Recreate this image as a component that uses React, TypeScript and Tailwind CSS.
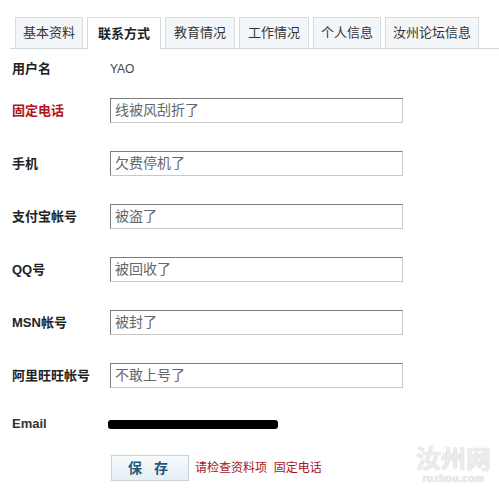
import React from 'react';

const tabs = [
  { name: '基本资料', w: 'w-[68px]' },
  { name: '联系方式', w: 'w-[74px]', active: true },
  { name: '教育情况', w: 'w-[70px]' },
  { name: '工作情况', w: 'w-[70px]' },
  { name: '个人信息', w: 'w-[68px]' },
  { name: '汝州论坛信息', w: 'w-[94px]' },
];

const fields = [
  { label: '固定电话', value: '线被风刮折了', error: true },
  { label: '手机', value: '欠费停机了' },
  { label: '支付宝帐号', value: '被盗了' },
  { label: 'QQ号', value: '被回收了' },
  { label: 'MSN帐号', value: '被封了' },
  { label: '阿里旺旺帐号', value: '不敢上号了' },
];

const App: React.FC = () => {
  return (
    <div
      className="relative w-[499px] h-[496px] bg-white overflow-hidden text-[12px] text-[#333]"
      style={{ fontFamily: '"Liberation Sans", "Noto Sans CJK SC", sans-serif' }}
    >
      <div className="pt-[17px] pl-[10px]">
        <div className="flex items-end gap-[4px] pl-[5px] border-b border-[#cfd6dc] h-[32px]">
          {tabs.map(t => (
            <div
              key={t.name}
              className={`${t.w} flex items-center justify-center border border-b-0 border-[#d4dbe1] text-[13px] ${
                t.active
                  ? 'h-[32px] bg-white font-bold text-[#222] -mb-px'
                  : 'h-[31px] bg-[#f3f6f9] text-[#333]'
              }`}
            >
              {t.name}
            </div>
          ))}
        </div>
      </div>

      <div className="pl-[12px] pt-[10px]">
        <div className="flex items-center h-[20px]">
          <div className="w-[98px] font-bold text-[13px] text-[#222]">用户名</div>
          <div className="text-[#444]">YAO</div>
        </div>

        <div className="flex flex-col gap-[28px] mt-[19px]">
          {fields.map(f => (
            <div key={f.label} className="flex items-center h-[25px]">
              <div className={`w-[98px] font-bold text-[13px] ${f.error ? 'text-[#b3141c]' : 'text-[#222]'}`}>
                {f.label}
              </div>
              <div className="w-[293px] h-[25px] border border-t-[#7c7c7c] border-l-[#7c7c7c] border-r-[#c8c8c8] border-b-[#c8c8c8] flex items-center pl-[4px] text-[14px] text-[#666]">
                {f.value}
              </div>
            </div>
          ))}
        </div>

        <div className="flex items-center h-[20px] mt-[26px]">
          <div className="w-[96px] font-bold text-[13px] text-[#333]">Email</div>
          <div className="w-[170px] h-[9px] bg-black rounded-[3px]" />
        </div>

        <div className="flex items-center mt-[21px] pl-[99px]">
          <button className="w-[78px] h-[26px] border border-[#c9d2da] bg-gradient-to-b from-[#f8fbfd] to-[#e4eef5] font-bold text-[14px] text-[#1f5a7c] tracking-[4px]">
            保 存
          </button>
          <span className="ml-[6px] text-[#a8141c]">请检查资料项&nbsp;&nbsp;固定电话</span>
        </div>
      </div>

      <div className="absolute left-[416px] top-[446px] flex flex-col items-center text-[#ececec]">
        <div className="text-[25px] font-bold leading-[27px]" style={{ textShadow: '0 0 1px #c4c4c4' }}>汝州网</div>
        <div className="text-[10px] font-bold leading-[11px] tracking-[0.5px]" style={{ textShadow: '0 0 1px #c4c4c4' }}>ruzhou.com</div>
      </div>
    </div>
  );
};

export default App;
